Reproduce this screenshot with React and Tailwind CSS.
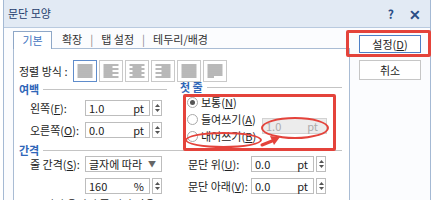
import React from "react";

function Spin() {
  return (
    <div className="flex h-[16px] w-[10px] flex-col items-center justify-between border border-[#bdbdbd] bg-white py-[3px]">
      <svg width="5" height="3" viewBox="0 0 5 3"><path d="M0 3 L2.5 0 L5 3 Z" fill="#555" /></svg>
      <svg width="5" height="3" viewBox="0 0 5 3"><path d="M0 0 L2.5 3 L5 0 Z" fill="#555" /></svg>
    </div>
  );
}

function NumField({ value, unit, width = "w-[65px]" }) {
  return (
    <div className="flex items-center gap-[2px]">
      <div className={`flex h-[16px] ${width} items-center justify-between border border-[#bdbdbd] bg-white pl-[3px] pr-[5px] text-[11px] leading-none text-[#222]`}>
        <span>{value}</span>
        <span>{unit}</span>
      </div>
      <Spin />
    </div>
  );
}

function AlignIcon({ kind }) {
  const rows = [0, 1, 2, 3, 4, 5, 6];
  const seg = (i) => {
    const full = [0.5, 15.5];
    if (kind === "justify") return full;
    if (kind === "left") return i % 2 ? [0.5, 9.5] : full;
    if (kind === "center") return i % 2 ? [3.5, 12.5] : full;
    if (kind === "right") return i % 2 ? [6.5, 15.5] : full;
    if (kind === "distribute") return full;
    return i === 6 ? [0.5, 7] : full;
  };
  return (
    <svg width="16" height="14" viewBox="0 0 16 14">
      {rows.map((i) => {
        const [a, b] = seg(i);
        return <line key={i} x1={a} x2={b} y1={1 + i * 2} y2={1 + i * 2} stroke="#727272" strokeWidth="1" />;
      })}
    </svg>
  );
}

function Heading({ children, className = "" }) {
  return (
    <div className={`flex items-center gap-[4px] text-[11px] font-bold leading-none text-[#2f66b8] ${className}`}>
      <span>{children}</span>
      <div className="h-px flex-1 bg-[#c4c4c4]" />
    </div>
  );
}

function Radio({ checked, children }) {
  return (
    <div className="flex h-[17px] items-center gap-[3px] text-[11px] leading-none text-[#222]">
      <span className="flex h-[11px] w-[11px] items-center justify-center rounded-full border border-[#a9a9a9] bg-white">
        {checked ? <span className="h-[5px] w-[5px] rounded-full bg-[#555]" /> : null}
      </span>
      <span>{children}</span>
    </div>
  );
}

export default function App() {
  const aligns = ["justify", "left", "center", "right", "distribute", "split"];

  return (
    <div className="relative flex h-[200px] w-[433px] overflow-hidden bg-white font-['Noto_Sans_CJK_KR',sans-serif]">
      <div className="w-[3px] shrink-0" />
      <div className="flex w-[428px] shrink-0 flex-col border-x border-[#a4b9d4] bg-[#fbfcfe]">
        <div className="flex h-[28px] shrink-0 items-center border-b border-[#b9cadf] bg-[#e2eaf4] pl-[4px] pr-[9px]">
          <span className="text-[11px] leading-none text-[#1e3c6c]">문단 모양</span>
          <span className="ml-auto text-[12px] font-bold leading-none text-[#2a4d86]">?</span>
          <span className="ml-[15px] text-[14px] font-bold leading-none text-[#2a4d86]">✕</span>
        </div>

        <div className="flex min-h-0 flex-1">
          <div className="ml-[9px] flex w-[337px] shrink-0 flex-col pt-[3px]">
            <div className="flex h-[17px] shrink-0 items-end text-[11px] leading-none text-[#333]">
              <div className="relative z-10 -mb-px flex h-[18px] w-[39px] items-center justify-center border border-b-0 border-[#8ea7c7] bg-white text-[#3f74bf]">
                기본
              </div>
              <div className="flex h-[17px] items-center gap-[8px] pl-[10px]">
                <span>확장</span>
                <span className="text-[#888]">|</span>
                <span>탭 설정</span>
                <span className="text-[#888]">|</span>
                <span>테두리/배경</span>
              </div>
            </div>

            <div className="flex h-[160px] shrink-0 flex-col border-x border-t border-[#a9bcd4] bg-white pl-[5px] pr-[7px] pt-[11px]">
              <div className="flex items-center">
                <span className="w-[54px] text-[11px] leading-none text-[#222]">정렬 방식 :</span>
                <div className="flex gap-[2px]">
                  {aligns.map((a, i) => (
                    <div
                      key={a}
                      className={`flex h-[22px] w-[24px] items-center justify-center border bg-white ${i === 0 ? "border-[#5f8ccb]" : "border-[#c9c9c9]"}`}
                    >
                      <AlignIcon kind={a} />
                    </div>
                  ))}
                </div>
              </div>

              <div className="flex h-[62px] shrink-0">
                <div className="flex w-[161px] flex-col">
                  <Heading className="h-[14px] pr-[13px]">여백</Heading>
                  <div className="mt-[3px] flex h-[18px] items-center pl-[11px]">
                    <span className="w-[55px] text-[11px] leading-none text-[#222]">왼쪽(<u>F</u>):</span>
                    <NumField value="1.0" unit="pt" />
                  </div>
                  <div className="mt-[4px] flex h-[18px] items-center pl-[11px]">
                    <span className="w-[55px] text-[11px] leading-none text-[#222]">오른쪽(<u>O</u>):</span>
                    <NumField value="0.0" unit="pt" />
                  </div>
                </div>
                <div className="flex flex-1 flex-col">
                  <Heading className="h-[14px]">첫 줄</Heading>
                  <div className="flex pl-[7px] pt-[1px]">
                    <div className="flex w-[75px] flex-col">
                      <Radio checked>보통(<u>N</u>)</Radio>
                      <Radio>들여쓰기(<u>A</u>)</Radio>
                      <Radio>내어쓰기(<u>B</u>)</Radio>
                    </div>
                    <div className="mt-[24px] flex h-[16px] w-[65px] items-center justify-between border border-[#d2d2d2] bg-[#ececec] pl-[3px] pr-[8px] text-[11px] leading-none text-[#ababab]">
                      <span>1.0</span>
                      <span>pt</span>
                    </div>
                  </div>
                </div>
              </div>

              <Heading className="mt-[1px] h-[12px]">간격</Heading>
              <div className="flex">
                <div className="flex w-[161px] flex-col pl-[11px]">
                  <div className="flex h-[16px] items-center">
                    <span className="w-[55px] text-[11px] leading-none text-[#222]">줄 간격(<u>S</u>):</span>
                    <div className="flex h-[16px] w-[77px] items-center justify-between border border-[#bdbdbd] bg-white pl-[3px] pr-[5px] text-[11px] leading-none text-[#222]">
                      <span>글자에 따라</span>
                      <span className="text-[8px] text-[#666]">▼</span>
                    </div>
                  </div>
                  <div className="mt-[6px] flex h-[16px] items-center pl-[55px]">
                    <NumField value="160" unit="%" />
                  </div>
                  <div className="mt-[5px] flex items-center gap-[4px] text-[11px] leading-none text-[#222]">
                    <span className="h-[10px] w-[10px] border border-[#a9a9a9] bg-white" />
                    <span>편집 용지의 줄 격자 사용(<u>G</u>)</span>
                  </div>
                </div>
                <div className="flex flex-1 flex-col pl-[8px]">
                  <div className="flex h-[16px] items-center">
                    <span className="w-[63px] text-[11px] leading-none text-[#222]">문단 위(<u>U</u>):</span>
                    <NumField value="0.0" unit="pt" width="w-[63px]" />
                  </div>
                  <div className="mt-[6px] flex h-[16px] items-center">
                    <span className="w-[63px] text-[11px] leading-none text-[#222]">문단 아래(<u>V</u>):</span>
                    <NumField value="0.0" unit="pt" width="w-[63px]" />
                  </div>
                </div>
              </div>
            </div>
          </div>

          <div className="flex flex-1 flex-col gap-[7px] pl-[9px] pt-[7px]">
            <div className="flex h-[18px] w-[62px] items-center justify-center border border-[#4d7fc6] bg-white text-[11px] leading-none text-[#222]">
              설정(<u>D</u>)
            </div>
            <div className="flex h-[20px] w-[62px] items-center justify-center border border-[#c6c6c6] bg-white text-[11px] leading-none text-[#222]">
              취소
            </div>
          </div>
        </div>
      </div>

      {/* red annotations */}
      <div className="absolute left-[346px] top-[30px] h-[27px] w-[85px] rounded-[2px] border-[3px] border-[#e4433b]" />
      <div className="absolute left-[183px] top-[94px] h-[57px] w-[153px] rounded-[2px] border-[3px] border-[#e4433b]" />
      <div className="absolute left-[185px] top-[132px] h-[16px] w-[77px] rounded-[50%] border-[2px] border-[#e4433b]" />
      <div className="absolute left-[261px] top-[117px] h-[22px] w-[68px] rounded-[50%] border-[2px] border-[#e4433b]" />
      <svg className="absolute left-[260px] top-[133px]" width="22" height="14" viewBox="0 0 22 14">
        <path d="M2 12 L12 8" stroke="#e4433b" strokeWidth="3" strokeLinecap="round" />
        <path d="M10 3 L20 4 L14 12 Z" fill="#e4433b" />
      </svg>
    </div>
  );
}
